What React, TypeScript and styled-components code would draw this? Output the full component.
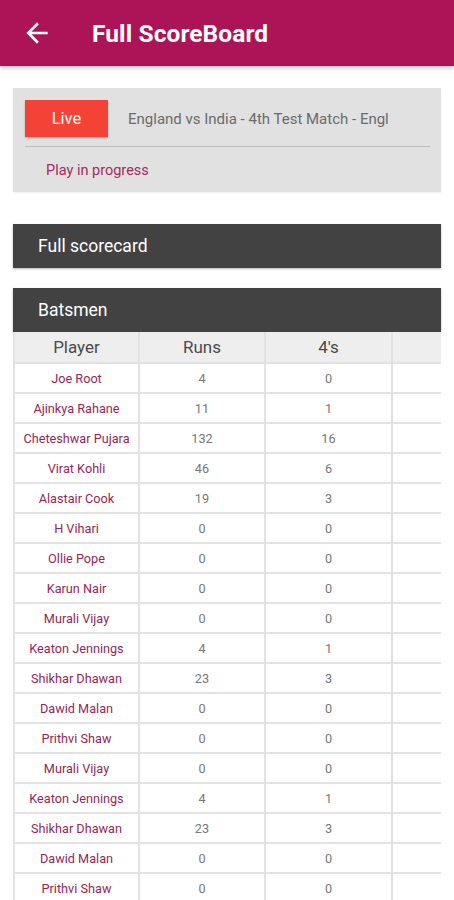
import React from "react";
import styled, { createGlobalStyle } from "styled-components";

const Global = createGlobalStyle`
  html, body { margin: 0; padding: 0; background: #ffffff; }
  body { font-family: Roboto, "Noto Sans", Arial, sans-serif; }
`;

const Page = styled.div`
  width: 454px;
  height: 900px;
  overflow: hidden;
  background: #ffffff;
`;

const AppBar = styled.header`
  height: 66px;
  background: #ad1457;
  display: flex;
  align-items: center;
  box-shadow: 0 2px 4px rgba(0, 0, 0, 0.25);
  position: relative;
  z-index: 1;
`;

const BackButton = styled.button`
  width: 92px;
  height: 66px;
  padding: 0 0 0 21px;
  border: 0;
  background: transparent;
  display: flex;
  align-items: center;
  color: #ffffff;
`;

const Title = styled.h1`
  margin: 0;
  font-size: 24.5px;
  font-weight: 700;
  color: #ffffff;
  letter-spacing: 0.1px;
`;

const Content = styled.main`
  padding: 22px 13px 0;
  display: flex;
  flex-direction: column;
`;

const Card = styled.section`
  background: #e1e1e1;
  padding: 12px 11px 0 12px;
  height: 104px;
  box-sizing: border-box;
  box-shadow: 0 1px 2px rgba(0, 0, 0, 0.08);
`;

const CardTop = styled.div`
  display: flex;
  align-items: center;
  gap: 20px;
  height: 37px;
`;

const LiveBadge = styled.div`
  width: 83px;
  height: 37px;
  flex: none;
  background: #f44336;
  color: #ffffff;
  font-size: 16.5px;
  display: flex;
  align-items: center;
  justify-content: center;
  box-shadow: 0 1px 2px rgba(0, 0, 0, 0.2);
`;

const MatchTitle = styled.div`
  font-size: 15px;
  color: #6b6b6b;
  white-space: nowrap;
`;

const Divider = styled.hr`
  margin: 9px 0 0;
  border: 0;
  border-top: 1px solid #bcbcbc;
`;

const Status = styled.div`
  padding: 15px 0 0 21px;
  font-size: 14.5px;
  color: #a82a63;
`;

const SectionBar = styled.div<{ $gap: number }>`
  margin-top: ${(p) => p.$gap}px;
  height: 44px;
  background: #424242;
  color: #ffffff;
  font-size: 17.5px;
  display: flex;
  align-items: center;
  padding-left: 25px;
  box-shadow: 0 1px 2px rgba(0, 0, 0, 0.3);
`;

const TableWrap = styled.div`
  overflow: hidden;
  width: 428px;
`;

const Table = styled.table`
  border-collapse: collapse;
  table-layout: fixed;
  width: 428px;
`;

const HeadCell = styled.th`
  height: 30px;
  padding: 0;
  background: #eeeeee;
  border: 2px solid #e2e2e2;
  border-top: 0;
  font-size: 17px;
  font-weight: 400;
  color: #4a4a4a;
  text-align: center;
`;

const Cell = styled.td<{ $name?: boolean }>`
  height: 28px;
  padding: 0;
  border: 2px solid #e2e2e2;
  font-size: 12.7px;
  color: ${(p) => (p.$name ? "#93275a" : "#777777")};
  text-align: center;
  white-space: nowrap;
`;

const rows: [string, number, number][] = [
  ["Joe Root", 4, 0],
  ["Ajinkya Rahane", 11, 1],
  ["Cheteshwar Pujara", 132, 16],
  ["Virat Kohli", 46, 6],
  ["Alastair Cook", 19, 3],
  ["H Vihari", 0, 0],
  ["Ollie Pope", 0, 0],
  ["Karun Nair", 0, 0],
  ["Murali Vijay", 0, 0],
  ["Keaton Jennings", 4, 1],
  ["Shikhar Dhawan", 23, 3],
  ["Dawid Malan", 0, 0],
  ["Prithvi Shaw", 0, 0],
  ["Murali Vijay", 0, 0],
  ["Keaton Jennings", 4, 1],
  ["Shikhar Dhawan", 23, 3],
  ["Dawid Malan", 0, 0],
  ["Prithvi Shaw", 0, 0],
];

export default function App() {
  return (
    <Page>
      <Global />
      <AppBar>
        <BackButton aria-label="Back">
          <svg width="32" height="32" viewBox="0 0 24 24" fill="#ffffff">
            <path d="M20 11H7.83l5.59-5.59L12 4l-8 8 8 8 1.41-1.41L7.83 13H20v-2z" />
          </svg>
        </BackButton>
        <Title>Full ScoreBoard</Title>
      </AppBar>
      <Content>
        <Card>
          <CardTop>
            <LiveBadge>Live</LiveBadge>
            <MatchTitle>England vs India - 4th Test Match - Engl</MatchTitle>
          </CardTop>
          <Divider />
          <Status>Play in progress</Status>
        </Card>
        <SectionBar $gap={32}>Full scorecard</SectionBar>
        <SectionBar $gap={20}>Batsmen</SectionBar>
        <TableWrap>
          <Table>
            <colgroup>
              <col style={{ width: 125 }} />
              <col style={{ width: 126 }} />
              <col style={{ width: 127 }} />
              <col style={{ width: 50 }} />
            </colgroup>
            <thead>
              <tr>
                <HeadCell>Player</HeadCell>
                <HeadCell>Runs</HeadCell>
                <HeadCell>4's</HeadCell>
                <HeadCell />
              </tr>
            </thead>
            <tbody>
              {rows.map(([name, runs, fours], i) => (
                <tr key={i}>
                  <Cell $name>{name}</Cell>
                  <Cell>{runs}</Cell>
                  <Cell>{fours}</Cell>
                  <Cell />
                </tr>
              ))}
            </tbody>
          </Table>
        </TableWrap>
      </Content>
    </Page>
  );
}
